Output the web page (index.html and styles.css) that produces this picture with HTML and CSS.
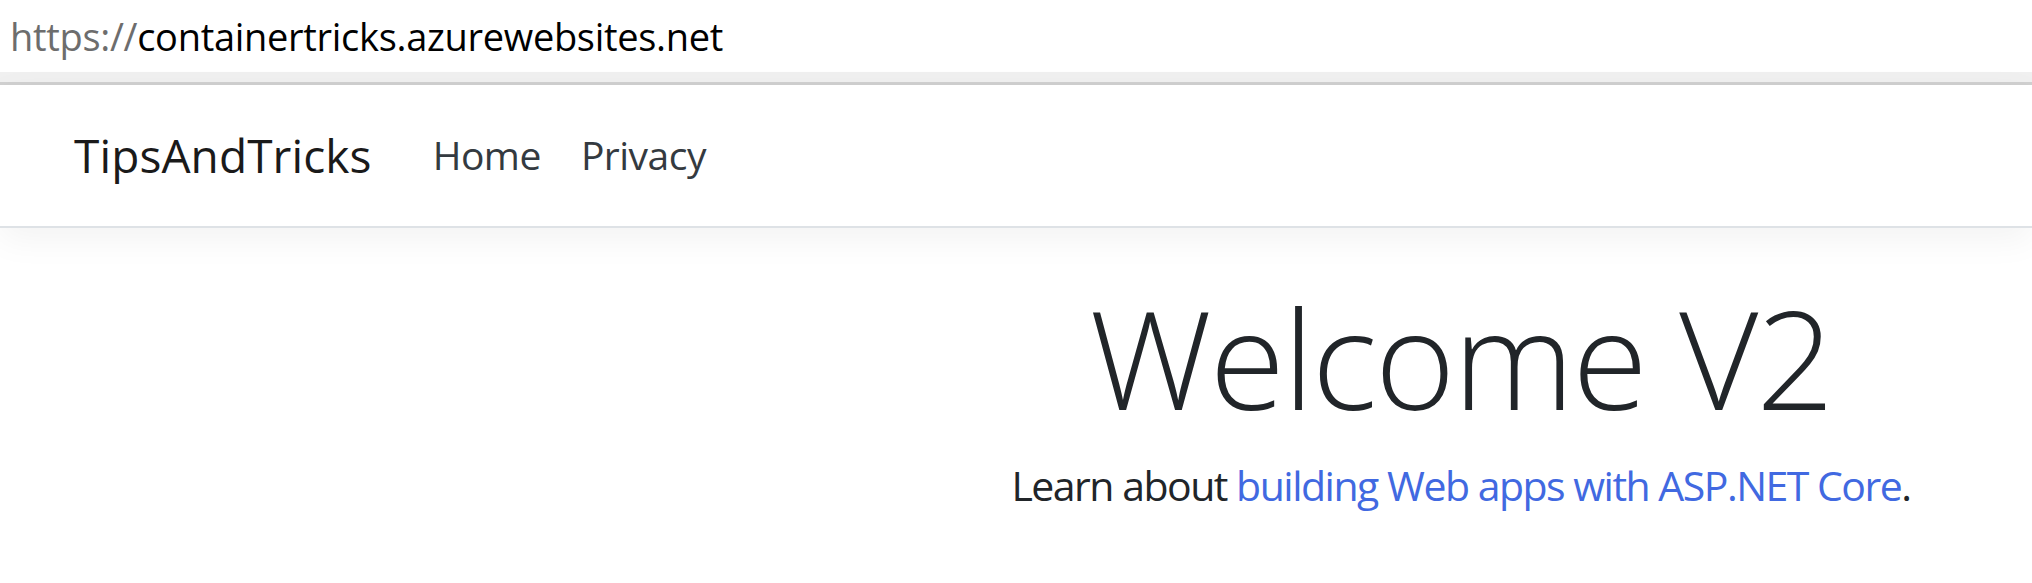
FILE: index.html
```html
<!DOCTYPE html>
<html lang="en">
<head>
<meta charset="utf-8">
<title>TipsAndTricks</title>
<link rel="stylesheet" href="styles.css">
</head>
<body>
  <div class="addressbar"><span class="scheme">https://</span><span class="host">containertricks.azurewebsites.net</span></div>
  <div class="chrome-edge"></div>
  <header class="navbar">
    <a class="brand" href="#">TipsAndTricks</a>
    <nav class="nav">
      <a class="nav-link" href="#">Home</a>
      <a class="nav-link" href="#">Privacy</a>
    </nav>
  </header>
  <main class="main">
    <h1 class="display">Welcome V2</h1>
    <p class="lead">Learn about <a class="link" href="#">building Web apps with ASP.NET Core</a>.</p>
  </main>
</body>
</html>
```

FILE: styles.css
```css
html, body {
  margin: 0;
  padding: 0;
  background: #fff;
  overflow: hidden;
}
body {
  font-family: "Open Sans", "Noto Sans", sans-serif;
  color: #212529;
  height: 583px;
}
.addressbar {
  height: 72px;
  line-height: 72px;
  padding-left: 10px;
  font-size: 38px;
  letter-spacing: -0.3px;
  white-space: nowrap;
}
.scheme { color: #6d6d6d; }
.host { color: #000; }
.chrome-edge {
  height: 10px;
  background: #f0f0f0;
  border-bottom: 3px solid #d0d0d0;
}
.navbar {
  height: 141px;
  display: flex;
  align-items: center;
  padding-left: 74px;
  border-bottom: 2px solid #dee2e6;
  box-shadow: 0 11px 33px rgba(0, 0, 0, 0.05);
  position: relative;
  background: #fff;
}
.brand {
  font-size: 46px;
  letter-spacing: 0.1px;
  color: #1a1a1a;
  text-decoration: none;
  margin-right: 41px;
  line-height: 1.5;
}
.nav {
  display: flex;
}
.nav-link {
  font-size: 39px;
  letter-spacing: -0.5px;
  color: #343a40;
  text-decoration: none;
  padding: 0 20px;
  line-height: 1.5;
}
.main {
  padding-left: 890px;
  text-align: center;
  padding-top: 47px;
}
.display {
  margin: 0;
  font-size: 137px;
  font-weight: 300;
  letter-spacing: -2px;
  line-height: 1.2;
  color: #212529;
}
.lead {
  margin: 16px 0 0;
  font-size: 41px;
  letter-spacing: -1.5px;
  line-height: 1.5;
  color: #212529;
}
.link {
  color: #4169e1;
  text-decoration: none;
}
```
